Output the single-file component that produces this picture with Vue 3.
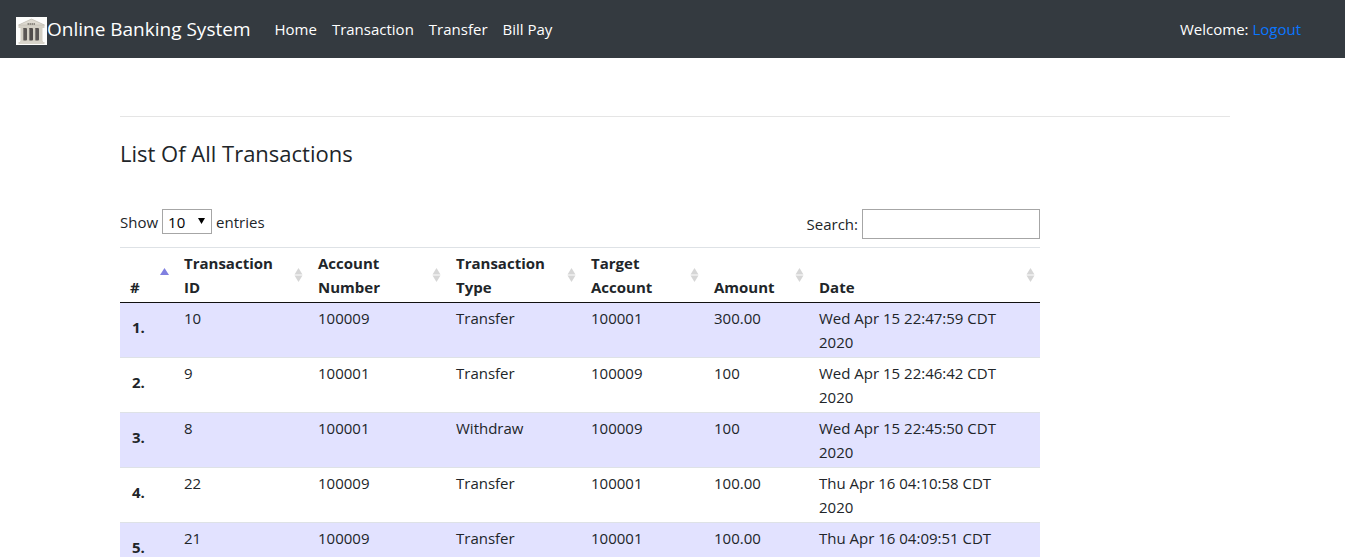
<script setup>
import { ref } from 'vue'

const pageSize = ref('10')
const search = ref('')

const columns = [
  { label: '#', key: 'num', sorted: true },
  { label: 'Transaction ID', key: 'id' },
  { label: 'Account Number', key: 'account' },
  { label: 'Transaction Type', key: 'type' },
  { label: 'Target Account', key: 'target' },
  { label: 'Amount', key: 'amount' },
  { label: 'Date', key: 'date' },
]

const rows = [
  { id: '10', account: '100009', type: 'Transfer', target: '100001', amount: '300.00', date: 'Wed Apr 15 22:47:59 CDT 2020' },
  { id: '9', account: '100001', type: 'Transfer', target: '100009', amount: '100', date: 'Wed Apr 15 22:46:42 CDT 2020' },
  { id: '8', account: '100001', type: 'Withdraw', target: '100009', amount: '100', date: 'Wed Apr 15 22:45:50 CDT 2020' },
  { id: '22', account: '100009', type: 'Transfer', target: '100001', amount: '100.00', date: 'Thu Apr 16 04:10:58 CDT 2020' },
  { id: '21', account: '100009', type: 'Transfer', target: '100001', amount: '100.00', date: 'Thu Apr 16 04:09:51 CDT 2020' },
]
</script>

<template>
  <header class="navbar">
    <a class="brand" href="#">
      <svg class="logo" viewBox="0 0 31 28" aria-hidden="true">
        <rect width="31" height="28" fill="#fdfdfc" />
        <path d="M15.500 2 L28.500 8 V11 H2.500 V8 Z" fill="#d5d1c7" />
        <path d="M15.500 2 L28.500 8 H2.500 Z" fill="#dedad1" stroke="#bcb8ae" stroke-width=".6" />
        <path d="M11.500 7 H19.500" stroke="#77736c" stroke-width="1.400" stroke-dasharray="1.500 .5" />
        <rect x="4.500" y="10" width="22" height="14" fill="#d3cfc4" />
        <rect x="7" y="11" width="4" height="12.500" rx="1" fill="#5a5654" />
        <rect x="13" y="11" width="4" height="12.500" rx="1" fill="#504c4a" />
        <rect x="19" y="11" width="4" height="12.500" rx="1" fill="#5a5654" />
        <path d="M7.500 12 V23 M13.500 12 V23 M19.500 12 V23" stroke="#8a8682" stroke-width=".8" />
        <path d="M4 24 H27 V25 H28.500 V27 H2.500 V25 H4 Z" fill="#d8d4ca" />
      </svg>
      <span>Online Banking System</span>
    </a>
    <nav class="links">
      <a href="#">Home</a>
      <a href="#">Transaction</a>
      <a href="#">Transfer</a>
      <a href="#">Bill Pay</a>
    </nav>
    <div class="welcome">Welcome: <a href="#">Logout</a></div>
  </header>

  <main class="content">
    <hr class="rule" />
    <h1 class="title">List Of All Transactions</h1>

    <section class="listing">
      <div class="controls">
        <label class="length">
          Show
          <span class="select-box">
            <select v-model="pageSize">
              <option>10</option>
              <option>25</option>
              <option>50</option>
              <option>100</option>
            </select>
            <svg class="arrow" viewBox="0 0 7 6" aria-hidden="true"><path d="M0 0 H7 L3.500 6 Z" fill="#000" /></svg>
          </span>
          entries
        </label>
        <label class="search">
          Search:
          <input v-model="search" type="search" />
        </label>
      </div>

      <table>
        <colgroup>
          <col v-for="c in columns" :key="c.key" :class="'col-' + c.key" />
        </colgroup>
        <thead>
          <tr>
            <th v-for="c in columns" :key="c.key" scope="col" :aria-sort="c.sorted ? 'ascending' : 'none'">
              <button type="button" class="sort">
                <span class="label">{{ c.label }}</span>
                <svg class="sort-icon" viewBox="0 0 9 14" aria-hidden="true">
                  <path v-if="c.sorted" d="M4.500 0 L9 7 H0 Z" fill="#8080e0" />
                  <template v-else>
                    <path d="M4.500 0 L8.500 6.500 H.5 Z" fill="#d6d6d6" />
                    <path d="M.5 7.500 H8.500 L4.500 14 Z" fill="#d6d6d6" />
                  </template>
                </svg>
              </button>
            </th>
          </tr>
        </thead>
        <tbody>
          <tr v-for="(row, i) in rows" :key="row.id">
            <th scope="row">{{ i + 1 }}.</th>
            <td>{{ row.id }}</td>
            <td>{{ row.account }}</td>
            <td>{{ row.type }}</td>
            <td>{{ row.target }}</td>
            <td>{{ row.amount }}</td>
            <td class="date">{{ row.date }}</td>
          </tr>
        </tbody>
      </table>
    </section>
  </main>
</template>

<style>
body {
  margin: 0;
  background: #fff;
  color: #212529;
  font: 400 15px/24px "Segoe UI", "Open Sans", "Noto Sans", sans-serif;
}
</style>

<style scoped>
* {
  box-sizing: border-box;
}
a {
  text-decoration: none;
}
.navbar {
  display: flex;
  align-items: center;
  height: 58px;
  padding: 0 44px 0 16px;
  background: #343a40;
  color: #fff;
}
.brand {
  display: flex;
  align-items: center;
  color: #fff;
  font-size: 19px;
  white-space: nowrap;
}
.logo {
  width: 31px;
  height: 28px;
  margin-top: 4px;
}
.links {
  display: flex;
  gap: 15px;
  margin-left: 24px;
}
.links a {
  color: #fff;
  white-space: nowrap;
}
.welcome {
  margin-left: auto;
  white-space: nowrap;
}
.welcome a {
  color: #0a76ff;
}
.content {
  padding: 58px 115px 0 120px;
}
.rule {
  height: 1px;
  margin: 0;
  border: 0;
  background: #e5e5e5;
}
.title {
  margin: 16px 0 36px;
  font-size: 22px;
  font-weight: 400;
  line-height: 40px;
}
.listing {
  max-width: 920px;
}
.controls {
  display: flex;
  justify-content: space-between;
  align-items: flex-start;
  margin-bottom: 8px;
}
.length,
.search {
  display: flex;
  align-items: center;
  gap: 4px;
}
.select-box {
  position: relative;
  display: flex;
}
select {
  width: 50px;
  height: 25px;
  padding: 0 5px;
  border: 1px solid #a6a6a6;
  border-radius: 0;
  background: #fff;
  color: #000;
  font: inherit;
  appearance: none;
}
.arrow {
  position: absolute;
  top: 9px;
  right: 7px;
  width: 7px;
  height: 6px;
  pointer-events: none;
}
input {
  width: 178px;
  height: 30px;
  padding: 0 5px;
  border: 1px solid #a6a6a6;
  border-radius: 0;
  background: #fff;
  font: inherit;
  appearance: none;
}
table {
  width: 100%;
  table-layout: fixed;
  border-collapse: separate;
  border-spacing: 0;
}
.col-num {
  width: 54px;
}
.col-id {
  width: 134px;
}
.col-account {
  width: 138px;
}
.col-type {
  width: 135px;
}
.col-target {
  width: 123px;
}
.col-amount {
  width: 105px;
}
thead th {
  padding: 3px 5px 3px 10px;
  border-top: 1px solid #dee2e6;
  border-bottom: 1px solid #111;
  text-align: left;
  vertical-align: bottom;
}
.sort {
  display: flex;
  align-items: flex-end;
  justify-content: space-between;
  gap: 10px;
  width: 100%;
  height: 48px;
  padding: 0;
  border: 0;
  background: none;
  color: inherit;
  font: inherit;
  font-weight: 700;
  text-align: left;
  cursor: pointer;
}
.sort-icon {
  flex: none;
  align-self: center;
  width: 9px;
  height: 14px;
}
tbody td,
tbody th {
  padding: 3px 10px;
  border-top: 1px solid #dee2e6;
  text-align: left;
  vertical-align: top;
}
tbody .date {
  padding-right: 30px;
}
tbody th {
  padding: 12px;
  font-weight: 700;
}
tbody tr:first-child > * {
  border-top: 0;
}
tbody tr:nth-child(odd) {
  background: #e2e2ff;
}
</style>
